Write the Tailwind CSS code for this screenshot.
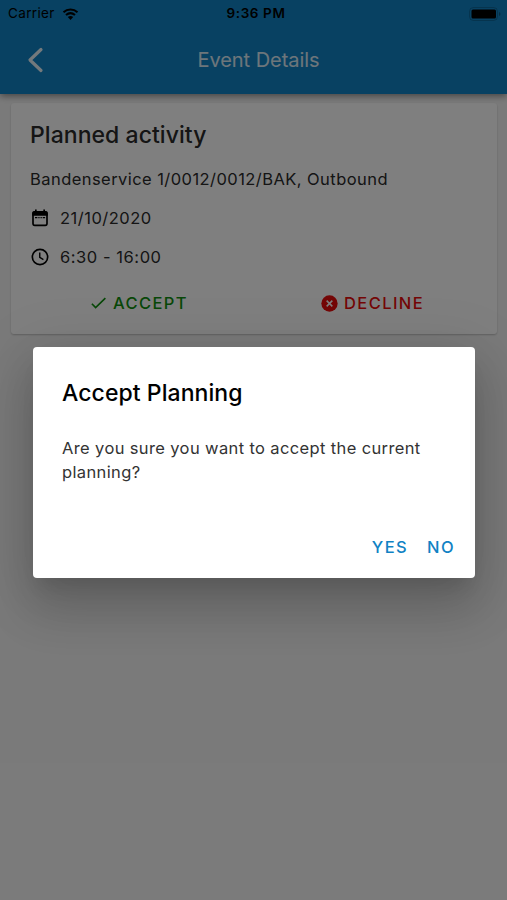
<!DOCTYPE html>
<html lang="en">
<head>
<meta charset="utf-8">
<title>Event Details</title>
<script src="https://cdn.jsdelivr.net/npm/@tailwindcss/browser@4"></script>
</head>
<body class="font-['Inter',sans-serif]">
<div class="relative h-[900px] w-[507px] overflow-hidden bg-[#f5f5f5]">
  <header class="relative z-10 h-[94px] bg-[#1082c4] shadow-[0_2px_7px_rgba(0,0,0,0.45)]">
    <div class="grid h-7 grid-cols-3 items-center pr-[6px] pl-2 text-[13.5px] leading-none text-black">
      <div class="flex items-center gap-[7px]">
        <span class="tracking-[0.35px]">Carrier</span>
        <svg class="h-3 w-[17px]" viewBox="0 0 16 12"><path d="M1 4.2C5 .6 11 .6 15 4.2M3.500 7C6.200 4.700 9.800 4.700 12.500 7" fill="none" stroke="#000" stroke-width="2.100"/><path d="M5.300 9.100Q8 7 10.700 9.100L8 12Z"/></svg>
      </div>
      <span class="pl-[3px] text-center text-[13.5px] font-semibold tracking-[0.6px]">9:36 PM</span>
      <svg class="-mt-px h-[14px] w-8 justify-self-end" viewBox="0 0 32 14"><rect x=".5" y=".5" width="28" height="13" rx="4" fill="none" stroke="#000" stroke-opacity=".2"/><rect x="2.500" y="2.500" width="24.500" height="9" rx="1.500"/><path d="M30 5v4q1.500-.5 1.500-2T30 5" fill-opacity=".3"/></svg>
    </div>
    <div class="grid h-16 grid-cols-[72px_1fr_72px] items-center">
      <svg class="ml-[26px] h-7 w-[18px]" viewBox="0 0 18 28"><path d="M15 3.500 4 14l11 10.500" fill="none" stroke="#fff" stroke-opacity=".9" stroke-width="3.200" stroke-linecap="round" stroke-linejoin="round"/></svg>
      <h1 class="pl-[10px] text-center text-[20px] leading-6 tracking-[-0.05px] text-white/85">Event Details</h1>
    </div>
  </header>
  <main class="mr-[10px] ml-[11px] mt-[9px] h-[231px] rounded-[3px] bg-white pt-5 pl-[19px] text-[#2a2a2a] shadow-[0_1px_2px_rgba(0,0,0,0.22)]">
    <h2 class="text-[23px] leading-6 font-medium tracking-[0.05px]">Planned activity</h2>
    <p class="mt-5 text-[16.500px] leading-6 tracking-[0.440px]">Bandenservice 1/0012/0012/BAK, Outbound</p>
    <div class="mt-[15px] flex h-6 items-center gap-[10px] text-[16.500px] tracking-[0.5px]">
      <svg class="h-5 w-5" viewBox="0 0 20 20"><rect x="3" y="4" width="14" height="13.300" rx="1.700" fill="none" stroke="#000" stroke-width="1.700"/><path d="M2.200 7.800V5a2 2 0 0 1 2-2H5V1.500h1.700V3h6.600V1.500H15V3h.800a2 2 0 0 1 2 2v2.800z"/><path d="M5 9.700h2.400M8.300 9.700h1.300M10.500 9.700h1.300M12.700 9.700h2.400" stroke="#000" stroke-width="1.300"/></svg>
      <span>21/10/2020</span>
    </div>
    <div class="mt-[15px] flex h-6 items-center gap-[10px] text-[16.500px] tracking-[0.550px]">
      <svg class="h-5 w-5" viewBox="0 0 24 24" fill="none" stroke="#000" stroke-width="2"><circle cx="12" cy="12" r="9.200"/><path d="M11.700 6.500v6l4.400 2.600" stroke-width="1.700"/></svg>
      <span>6:30 - 16:00</span>
    </div>
    <div class="mt-[22px] flex h-6 items-center text-[16.500px] font-medium tracking-[1.400px]">
      <div class="flex w-[229px] items-center gap-[5px] pl-[60px] text-[#109010]">
        <svg class="h-[18px] w-[18px]" viewBox="0 0 24 24"><path d="m2.500 13 5 5L20.500 5.500" fill="none" stroke="currentColor" stroke-width="2.200"/></svg>
        <span>ACCEPT</span>
      </div>
      <div class="flex items-center gap-[6px] pl-[62px] text-[#e80c0c]">
        <svg class="h-[17px] w-[17px]" viewBox="0 0 24 24"><circle cx="12" cy="12" r="11.500" fill="currentColor"/><path d="m8 8 8 8m0-8-8 8" stroke="#fff" stroke-width="2.200"/></svg>
        <span>DECLINE</span>
      </div>
    </div>
  </main>
  <div class="absolute inset-0 z-20 bg-black/50 pt-[347px] pl-[33px]">
    <section class="flex h-[231px] w-[442px] flex-col rounded-[4px] bg-white pt-[34px] pr-5 pb-[19px] pl-[29px] shadow-[0_14px_18px_-8px_rgba(0,0,0,0.1),0_30px_48px_4px_rgba(0,0,0,0.14),0_11px_58px_10px_rgba(0,0,0,0.1)]">
      <h2 class="text-[23px] leading-6 font-medium tracking-[0.07px] text-black">Accept Planning</h2>
      <p class="mt-[31px] text-[16.500px] leading-6 tracking-[0.370px] text-[#333]">Are you sure you want to accept the current<br>planning?</p>
      <div class="mt-auto flex justify-end gap-[19px] text-[16.500px] leading-6 font-medium tracking-[1.400px] text-[#1082c4]">
        <button>YES</button><button>NO</button>
      </div>
    </section>
  </div>
</div>
</body>
</html>
